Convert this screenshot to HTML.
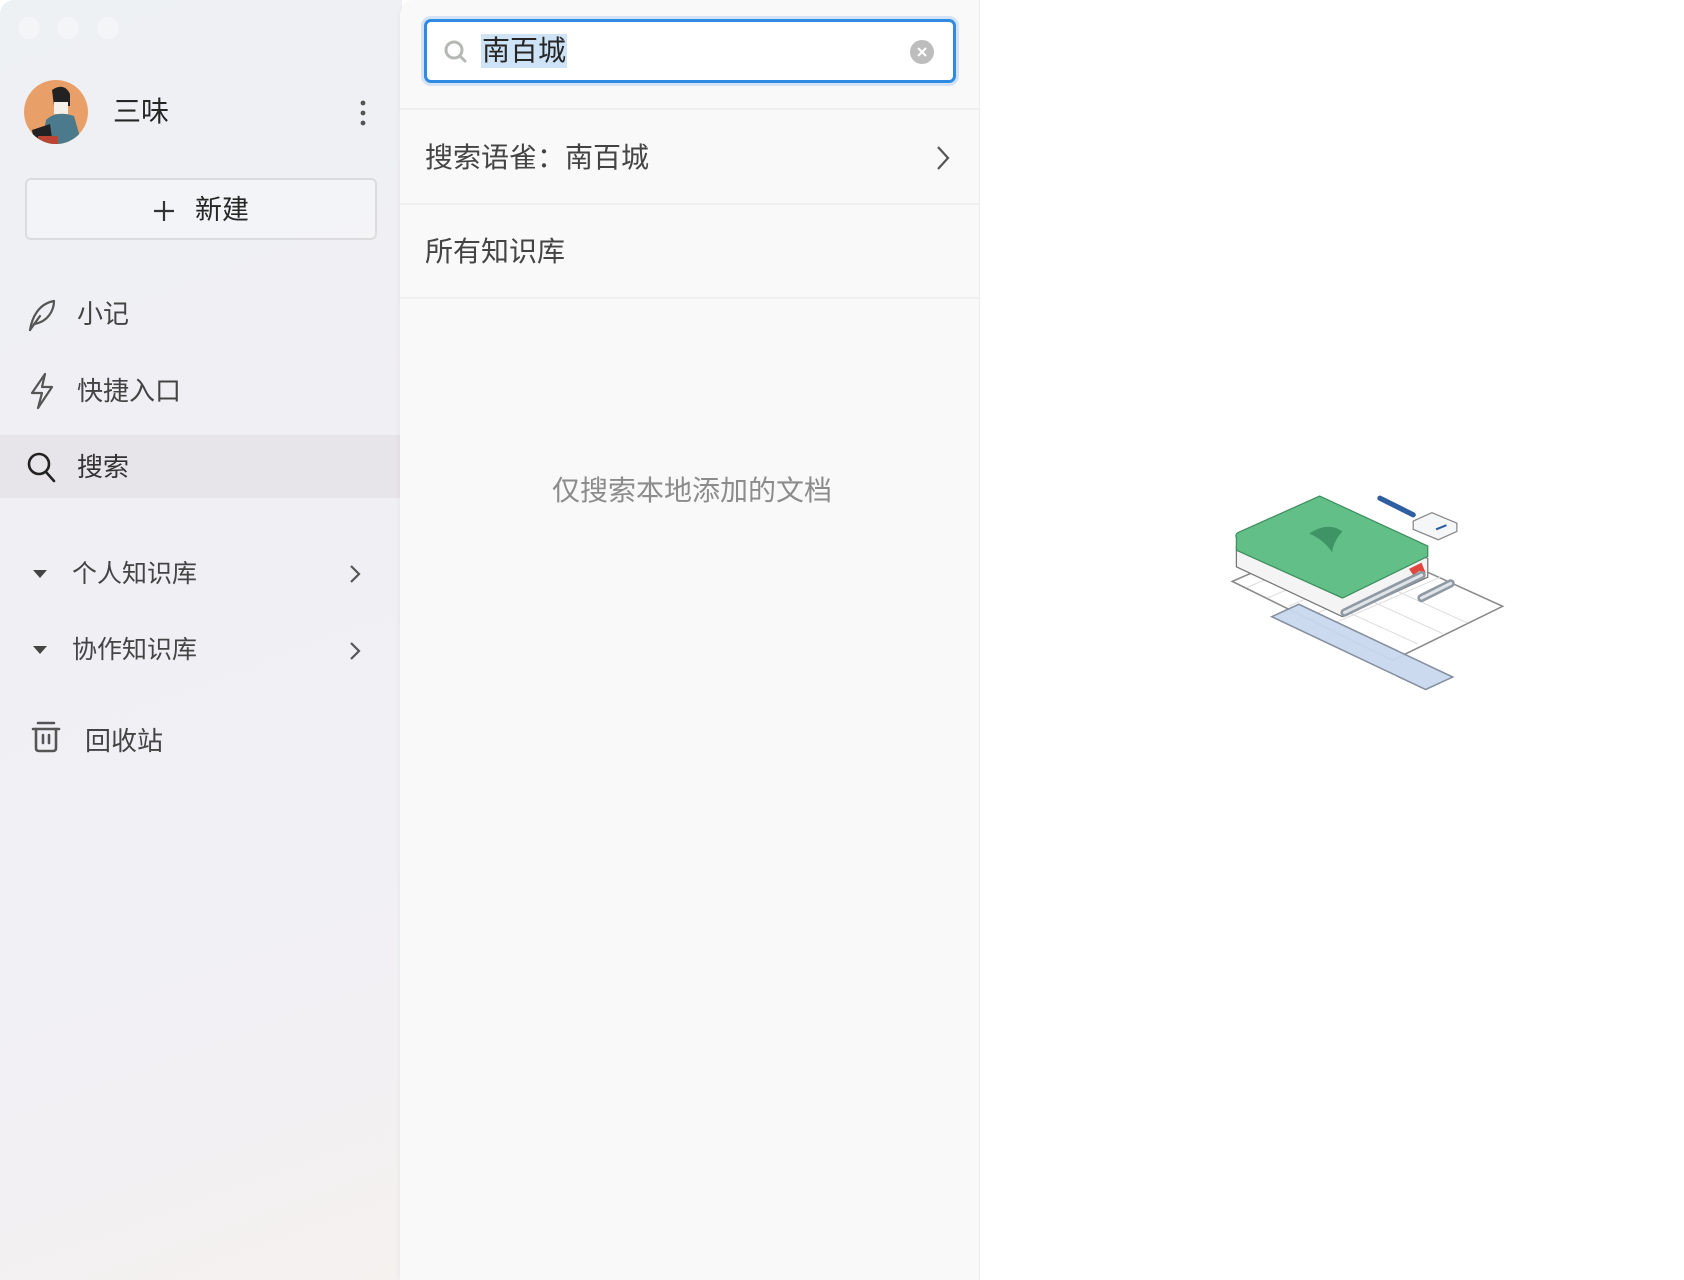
<!DOCTYPE html>
<html><head><meta charset="utf-8">
<style>
*{margin:0;padding:0;box-sizing:border-box}
html,body{width:1684px;height:1280px;overflow:hidden;background:#fff;font-family:"Liberation Sans","Noto Sans CJK SC",sans-serif;color:#333}
.side{position:absolute;left:0;top:0;width:402px;height:1280px;background:linear-gradient(160deg,#eef1f4 0%,#f0eff4 35%,#f1f0f5 70%,#f4f1ef 100%);border-top-left-radius:14px}
.tl{position:absolute;top:17px;width:22px;height:22px;border-radius:50%;background:rgba(255,255,255,.3)}
.t{position:absolute;white-space:nowrap;line-height:1}
.mid{position:absolute;left:400px;top:0;width:580px;height:1280px;background:#f9f9fa;border-right:1px solid #ececee;border-top-left-radius:16px;box-shadow:-2px 0 4px rgba(0,0,0,.03)}
.div{position:absolute;left:0;right:0;height:2px;background:#efeff1}
</style></head><body>
<div class="side">
  <div class="tl" style="left:18px"></div><div class="tl" style="left:57px"></div><div class="tl" style="left:97px"></div>
  <svg style="position:absolute;left:24px;top:80px" width="64" height="64" viewBox="0 0 64 64">
    <defs><clipPath id="c"><circle cx="32" cy="32" r="32"/></clipPath></defs>
    <g clip-path="url(#c)"><rect width="64" height="64" fill="#e9a068"/>
    <path d="M28 10 Q40 2 46 14 L46 26 L30 26Z" fill="#222"/>
    <path d="M30 22 h14 v12 h-14z" fill="#f4efe8"/>
    <path d="M22 40 Q32 30 50 36 L58 64 L18 64Z" fill="#4b7a8c"/>
    <path d="M8 50 L26 44 L28 58 L10 62Z" fill="#222"/>
    <rect x="14" y="56" width="20" height="8" fill="#b43"/></g>
  </svg>
  <div class="t" style="left:113px;top:98px;font-size:28px;color:#262626">三味</div>
  <svg style="position:absolute;left:359px;top:100px" width="8" height="26"><circle cx="4" cy="3" r="2.4" fill="#555"/><circle cx="4" cy="13" r="2.4" fill="#555"/><circle cx="4" cy="23" r="2.4" fill="#555"/></svg>
  <div style="position:absolute;left:25px;top:178px;width:352px;height:62px;border:2px solid #dcdcde;border-radius:6px;background:rgba(255,255,255,.25)"></div>
  <svg style="position:absolute;left:153px;top:200px" width="22" height="22"><path d="M11 1v20M1 11h20" stroke="#333" stroke-width="2.2"/></svg>
  <div class="t" style="left:195px;top:197px;font-size:27px;color:#262626">新建</div>

  <svg style="position:absolute;left:26px;top:298px" width="32" height="34" viewBox="0 0 32 34" fill="none" stroke="#555" stroke-width="2.2" stroke-linecap="round" stroke-linejoin="round"><path d="M4 32 C6 20 12 6 28 3 C28 12 22 24 8 26"/><path d="M4 32 L14 18"/></svg>
  <div class="t" style="left:77px;top:301px;font-size:26px;color:#444">小记</div>
  <svg style="position:absolute;left:28px;top:372px" width="28" height="38" viewBox="0 0 28 38" fill="none" stroke="#555" stroke-width="2.2" stroke-linejoin="round"><path d="M17 2 L4 21 H14 L10 36 L24 15 H14 Z"/></svg>
  <div class="t" style="left:77px;top:378px;font-size:26px;color:#444">快捷入口</div>

  <div style="position:absolute;left:0;top:435px;width:402px;height:63px;background:#e7e4ea"></div>
  <svg style="position:absolute;left:26px;top:450px" width="32" height="34" viewBox="0 0 32 34" fill="none" stroke="#222" stroke-width="2.6" stroke-linecap="round"><circle cx="13" cy="14" r="10"/><path d="M20 22 L28 31"/></svg>
  <div class="t" style="left:77px;top:454px;font-size:26px;color:#333">搜索</div>

  <svg style="position:absolute;left:32px;top:569px" width="16" height="10"><path d="M1 1 H15 L8 9Z" fill="#444"/></svg>
  <div class="t" style="left:72px;top:562px;font-size:25px;color:#444">个人知识库</div>
  <svg style="position:absolute;left:349px;top:564px" width="12" height="20" fill="none" stroke="#555" stroke-width="2.2"><path d="M2 2 L10 10 L2 18"/></svg>
  <svg style="position:absolute;left:32px;top:645px" width="16" height="10"><path d="M1 1 H15 L8 9Z" fill="#444"/></svg>
  <div class="t" style="left:72px;top:638px;font-size:25px;color:#444">协作知识库</div>
  <svg style="position:absolute;left:349px;top:641px" width="12" height="20" fill="none" stroke="#555" stroke-width="2.2"><path d="M2 2 L10 10 L2 18"/></svg>

  <svg style="position:absolute;left:31px;top:720px" width="30" height="34" viewBox="0 0 30 34" fill="none" stroke="#555" stroke-width="2.6" stroke-linecap="round"><path d="M7 3 H23"/><path d="M2 9 H28"/><path d="M5 9 V28 Q5 31 8 31 H22 Q25 31 25 28 V9"/><path d="M12 15 V23 M18 15 V23"/></svg>
  <div class="t" style="left:85px;top:728px;font-size:26px;color:#444">回收站</div>
</div>

<div class="mid">
  <div style="position:absolute;left:21px;top:16px;width:538px;height:70px;border-radius:10px;background:#d3e2f5"></div>
  <div style="position:absolute;left:24px;top:19px;width:532px;height:64px;border:3px solid #2f8ae4;border-radius:7px;background:#fff"></div>
  <svg style="position:absolute;left:43px;top:39px" width="26" height="26" fill="none" stroke="#b5b8b3" stroke-width="3" stroke-linecap="round"><circle cx="11" cy="11" r="8"/><path d="M17 17 L22 22"/></svg>
  <div class="t" style="left:81px;top:34px;font-size:28px;color:#262626;background:#cfe3f7;padding:3px 1px">南百城</div>
  <svg style="position:absolute;left:510px;top:40px" width="24" height="24"><circle cx="12" cy="12" r="12" fill="#bdbdbd"/><path d="M8 8 L16 16 M16 8 L8 16" stroke="#fff" stroke-width="2"/></svg>

  <div class="div" style="top:108px"></div>
  <div class="t" style="left:25px;top:144px;font-size:28px;color:#444">搜索语雀：南百城</div>
  <svg style="position:absolute;left:536px;top:145px" width="14" height="26" fill="none" stroke="#555" stroke-width="2.2"><path d="M2 2 L12 13 L2 24"/></svg>
  <div class="div" style="top:203px"></div>
  <div class="t" style="left:25px;top:238px;font-size:28px;color:#444">所有知识库</div>
  <div class="div" style="top:297px"></div>
  <div class="t" style="left:150px;top:477px;width:284px;text-align:center;font-size:28px;color:#8c8c8c">仅搜索本地添加的文档</div>
</div>

<svg style="position:absolute;left:1226px;top:494px" width="290" height="226" viewBox="0 0 290 226">
  <g transform="scale(1.04)">
  <path d="M6 84 L112 38 L266 108 L160 160Z" fill="#fff" stroke="#8a8a8a" stroke-width="1.5"/>
  <g stroke="#ddd" stroke-width="1">
    <path d="M30 74 L184 144 M54 64 L208 134 M78 54 L232 124 M20 90 L126 44 M40 100 L146 54 M60 108 L166 62 M80 118 L186 72 M100 126 L206 80"/>
  </g>
  <path d="M44 118 L70 106 L218 176 L192 188Z" fill="#c9d9ef" stroke="#7f8a99" stroke-width="1.5" opacity=".95"/>
  <path d="M10 50 L90 14 L194 62 L194 80 L112 118 L10 70Z" fill="#f4f4f4" stroke="#777" stroke-width="1.2"/>
  <path d="M10 42 Q8 38 14 36 L90 2 L194 50 L194 60 L112 100 L10 54Z" fill="#63bf88" stroke="#3f8f5e" stroke-width="1.2"/>
  <path d="M80 38 Q98 26 112 36 Q104 44 102 56 Q94 44 80 38Z" fill="#3e9464"/>
  <path d="M176 72 L188 66 L192 76 L186 74 L180 78Z" fill="#e0483f"/>
  <path d="M148 4 L180 20" stroke="#2f5fa0" stroke-width="5" stroke-linecap="round"/>
  <path d="M114 114 L188 78" stroke="#8f99a3" stroke-width="8" stroke-linecap="round"/>
  <path d="M114 114 L188 78" stroke="#dfe4e8" stroke-width="3" stroke-linecap="round"/>
  <path d="M188 100 L216 86" stroke="#8f99a3" stroke-width="8" stroke-linecap="round"/>
  <path d="M188 100 L216 86" stroke="#dfe4e8" stroke-width="3" stroke-linecap="round"/>
  <path d="M180 26 L198 18 L222 28 L222 36 L204 44 L180 34Z" fill="#f4f6f8" stroke="#888" stroke-width="1.2"/>
  <path d="M202 34 L212 30" stroke="#2f5fa0" stroke-width="2"/>
  </g>
</svg>
</body></html>
